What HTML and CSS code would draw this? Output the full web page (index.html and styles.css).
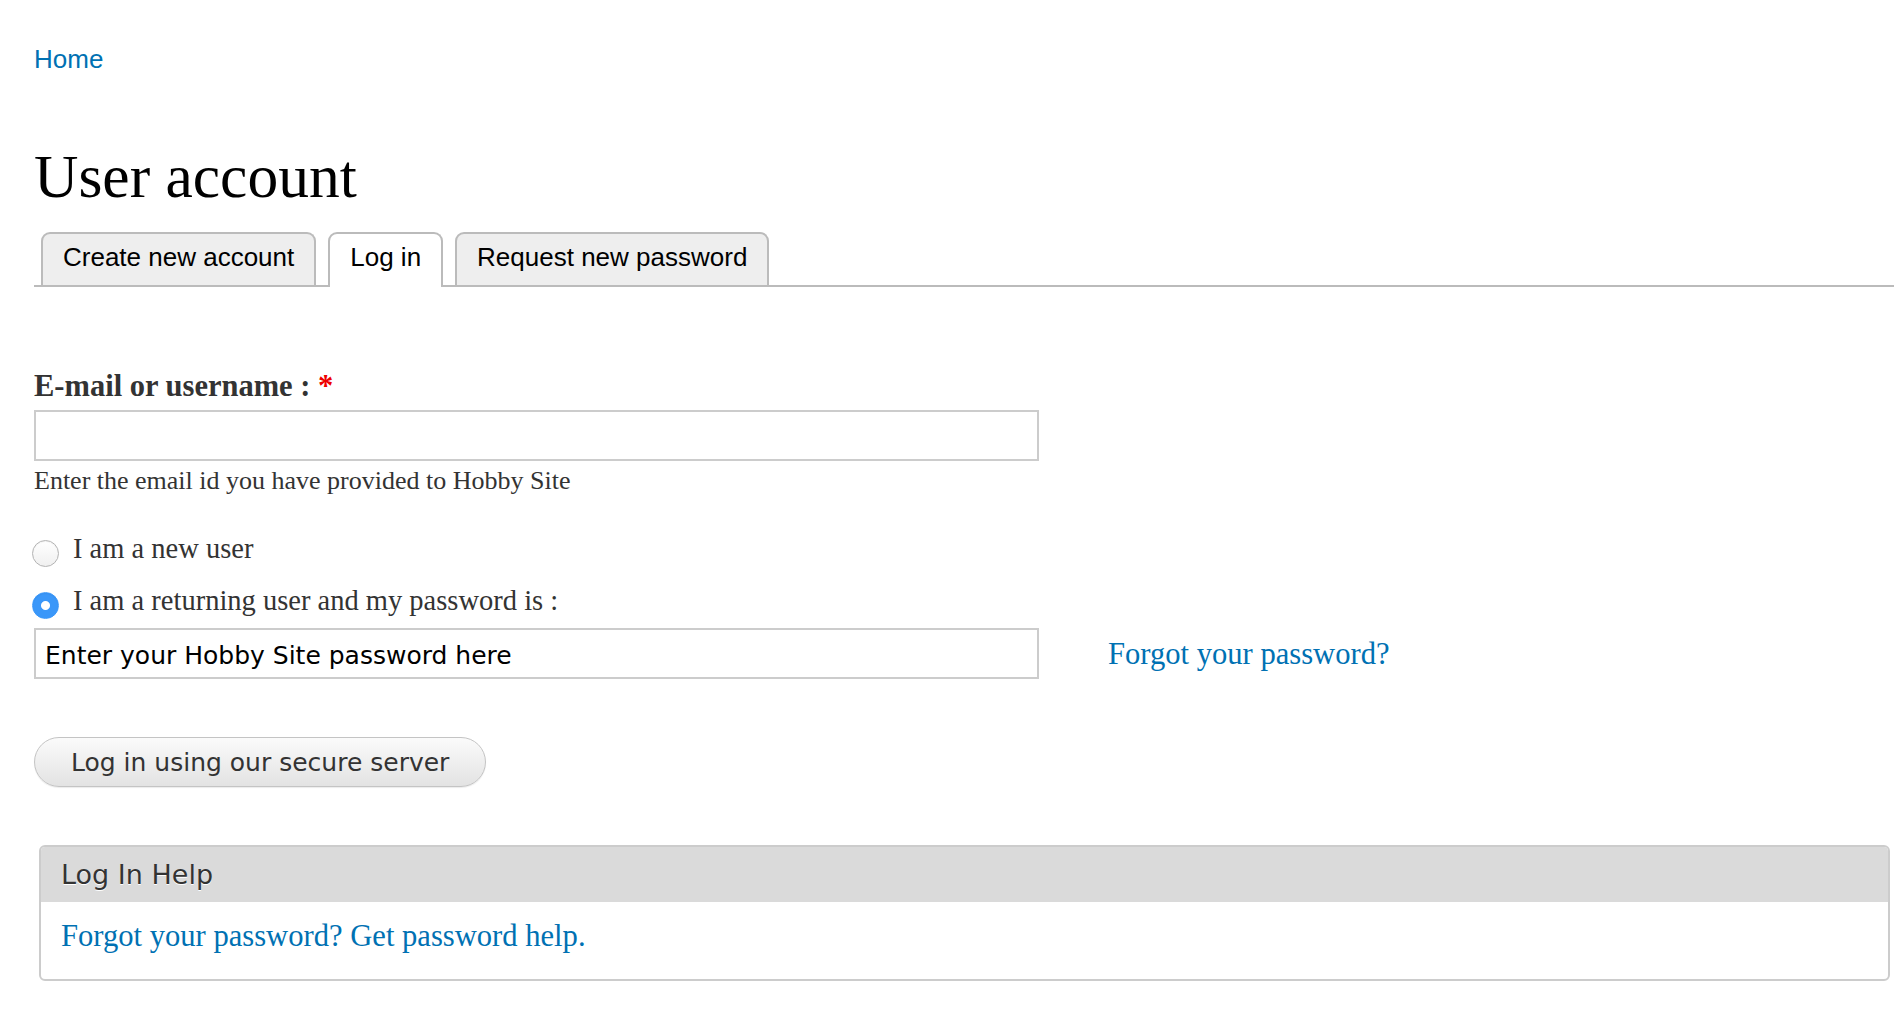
FILE: index.html
```html
<!DOCTYPE html>
<html lang="en">
<head>
    <meta charset="UTF-8">
    <meta name="viewport" content="width=device-width, initial-scale=1.0">
    <title>User account</title>
    <link rel="stylesheet" href="styles.css">
</head>
<body>
    <div class="page">
        <nav class="breadcrumb">
            <a href="#">Home</a>
        </nav>
        <h1 class="page-title">User account</h1>
        <ul class="tabs">
            <li><a href="#">Create new account</a></li>
            <li class="active"><a href="#">Log in</a></li>
            <li><a href="#">Request new password</a></li>
        </ul>
        <form class="login-form" onsubmit="return false">
            <div class="form-item">
                <label for="edit-name">E-mail or username : <span class="form-required">*</span></label>
                <input type="text" id="edit-name" class="form-text">
                <div class="description">Enter the email id you have provided to Hobby Site</div>
            </div>
            <div class="form-radios">
                <label class="option"><input type="radio" name="user-type" class="form-radio"> I am a new user</label>
                <label class="option"><input type="radio" name="user-type" class="form-radio" checked> I am a returning user and my password is :</label>
            </div>
            <div class="password-row">
                <input type="text" class="form-text password" value="Enter your Hobby Site password here">
                <a href="#" class="forgot-link">Forgot your password?</a>
            </div>
            <button class="form-submit">Log in using our secure server</button>
        </form>
        <section class="help-box">
            <h2>Log In Help</h2>
            <div class="help-content">
                <a href="#">Forgot your password? Get password help.</a>
            </div>
        </section>
    </div>
</body>
</html>
```

FILE: styles.css
```css
body {
    margin: 0;
    padding: 0;
    background-color: #fff;
    font-family: "Liberation Serif", serif;
    color: #333;
}

a {
    color: #0071b3;
    text-decoration: none;
}

.page {
    padding: 0 4px 20px 34px;
}

.breadcrumb {
    padding-top: 44px;
    font-family: "Liberation Sans", Arial, sans-serif;
    font-size: 26px;
    line-height: 30px;
}

.page-title {
    margin: 69px 0 23px;
    font-size: 61.5px;
    line-height: 66px;
    font-weight: normal;
    color: #000;
}

/* tabs */
.tabs {
    display: flex;
    list-style: none;
    margin: 0;
    padding: 0 0 0 7px;
    border-bottom: 2px solid #bbb;
}

.tabs li {
    margin-right: 12px;
}

.tabs a {
    display: block;
    padding: 8px 20px 13px;
    border: 2px solid #bbb;
    border-bottom: none;
    border-radius: 9px 9px 0 0;
    background-color: #eee;
    color: #000;
    font-family: "Liberation Sans", Arial, sans-serif;
    font-size: 26px;
    line-height: 30px;
}

.tabs li.active a {
    background-color: #fff;
    margin-bottom: -2px;
    padding-bottom: 15px;
}

/* form */
.login-form {
    margin-top: 81px;
}

.form-item label {
    display: block;
    font-size: 30.5px;
    line-height: 36px;
    font-weight: bold;
    color: #333;
}

.form-required {
    color: #e00;
}

.form-text {
    display: block;
    box-sizing: border-box;
    width: 1005px;
    height: 51px;
    margin: 6px 0 0;
    padding: 0 9px;
    border: 2px solid #ccc;
    background: #fff;
    outline: none;
}

.description {
    margin-top: 5px;
    font-size: 26px;
    line-height: 30px;
    color: #333;
}

.form-radios {
    margin-top: 37px;
}

.option {
    display: flex;
    align-items: center;
    height: 32px;
    font-size: 28.5px;
    line-height: 32px;
    color: #333;
}

.option + .option {
    margin-top: 20px;
}

.form-radio {
    appearance: none;
    -webkit-appearance: none;
    box-sizing: border-box;
    width: 27px;
    height: 27px;
    margin: 8px 14px 0 -2px;
    border: 1px solid #b3b3b3;
    border-radius: 50%;
    background: linear-gradient(#fff, #f0f0f0);
    box-shadow: inset 0 1px 1px rgba(0, 0, 0, 0.05);
    flex-shrink: 0;
}

.form-radio:checked {
    border-color: #3a97f9;
    background: radial-gradient(circle, #fff 0, #fff 4px, #3a97f9 5px);
}

.password-row {
    display: flex;
    align-items: center;
    margin-top: 11px;
}

.password-row .form-text {
    margin: 0;
    padding-top: 4px;
    font-family: "DejaVu Sans", sans-serif;
    font-size: 25px;
    color: #000;
}

.forgot-link {
    margin-left: 69px;
    font-size: 30.6px;
    line-height: 36px;
}

.form-submit {
    display: block;
    height: 50px;
    margin-top: 58px;
    padding: 0 36px;
    border: 1px solid #c4c4c4;
    border-radius: 25px;
    background: linear-gradient(#fbfbfb, #e3e3e3);
    box-shadow: 0 1px 1px rgba(0, 0, 0, 0.08);
    color: #333;
    font-family: "DejaVu Sans", sans-serif;
    font-size: 25px;
    cursor: pointer;
}

/* help box */
.help-box {
    margin: 58px 4px 0 5px;
    border: 2px solid #ccc;
    border-radius: 6px;
    overflow: hidden;
}

.help-box h2 {
    margin: 0;
    padding: 0 20px;
    height: 55px;
    background-color: #dadada;
    font-family: "DejaVu Sans", sans-serif;
    font-size: 27px;
    line-height: 55px;
    font-weight: normal;
    color: #333;
    text-shadow: 0 1px 0 #fff;
}

.help-content {
    padding: 16px 20px 25px;
    font-size: 30.6px;
    line-height: 36px;
}
```
